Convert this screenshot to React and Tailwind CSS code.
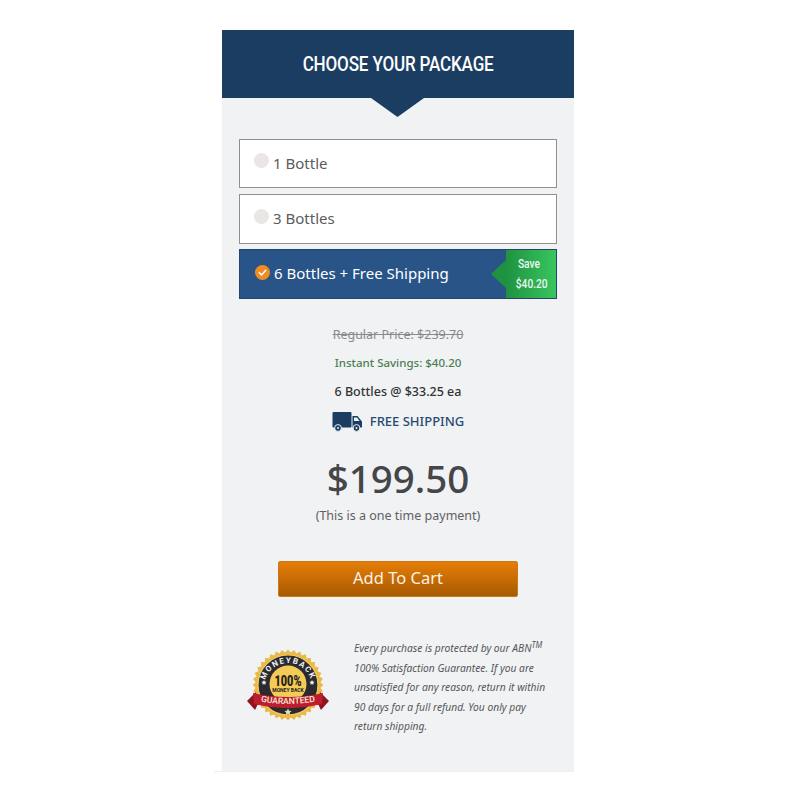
const SANS = "font-['Noto_Sans',sans-serif]";

function Radio({ checked }) {
  if (checked) {
    return (
      <svg viewBox="0 0 16 16" className="w-[15px] h-[15px] shrink-0 mt-[-4px]">
        <circle cx="8" cy="8" r="8" fill="#f08c26" />
        <path d="M4.6 8.3l2.3 2.3 4.4-4.8" fill="none" stroke="#fff" strokeWidth="1.7" strokeLinecap="round" strokeLinejoin="round" />
      </svg>
    );
  }
  return <span className="w-[15px] h-[15px] shrink-0 rounded-full bg-[#ebe6e6] mt-[-6px]" />;
}

function Option({ label, h }) {
  return (
    <div className={`flex items-center gap-[4px] pl-[14px] bg-white border border-[#8f8f8f] text-[#5c5c5c] text-[15px] ${h}`}>
      <Radio />
      <span className="-mt-[1px]">{label}</span>
    </div>
  );
}

function Truck() {
  return (
    <svg viewBox="0 0 31 20" className="w-[31px] h-[20px]">
      <rect x="0.5" y="0" width="19" height="15.5" rx="1" fill="#1b3d61" />
      <path d="M20.5 4h5l4.5 5.5v6h-9.5z" fill="#1b3d61" />
      <path d="M22 5.5h3l2.6 3.6H22z" fill="#f1f2f4" />
      <circle cx="6" cy="16" r="3.4" fill="#1b3d61" stroke="#f1f2f4" strokeWidth="1" />
      <circle cx="6" cy="16" r="1" fill="#f1f2f4" />
      <circle cx="24.5" cy="16" r="3.4" fill="#1b3d61" stroke="#f1f2f4" strokeWidth="1" />
      <circle cx="24.5" cy="16" r="1" fill="#f1f2f4" />
    </svg>
  );
}

function Seal() {
  const pts = [];
  const n = 36;
  for (let i = 0; i < n * 2; i++) {
    const r = i % 2 ? 32.5 : 35.5;
    const a = (i * Math.PI) / n;
    pts.push(`${(41 + r * Math.sin(a)).toFixed(1)},${(40 - r * Math.cos(a)).toFixed(1)}`);
  }
  return (
    <svg viewBox="0 0 82 82" className="w-[82px] h-[82px]">
      <polygon points={pts.join(' ')} fill="#e9b949" />
      <circle cx="41" cy="40" r="30" fill="#2a2a30" stroke="#f1c95c" strokeWidth="1.2" />
      <circle cx="41" cy="39" r="18.5" fill="#f4cb57" />
      <defs>
        <path id="sealArc" d="M17 42a24 24 0 0 1 48 0" />
      </defs>
      <text fontFamily="Roboto, sans-serif" fontWeight="700" fontSize="8" fill="#f2f2f2" letterSpacing="1.4">
        <textPath href="#sealArc" startOffset="50%" textAnchor="middle">MONEYBACK</textPath>
      </text>
      <text x="41" y="41" textAnchor="middle" fontFamily="Roboto, sans-serif" fontWeight="900" fontSize="15" fill="#26221c" textLength="27" lengthAdjust="spacingAndGlyphs">100%</text>
      <text x="41" y="47" textAnchor="middle" fontFamily="Roboto, sans-serif" fontWeight="700" fontSize="5" fill="#26221c">MONEY BACK</text>
      <path d="M0 56l9-9 2 12-3 6z" fill="#8f1420" />
      <path d="M82 56l-9-9-2 12 3 6z" fill="#8f1420" />
      <path d="M6 48q35 8 70 0l-1 11q-34 8-68 0z" fill="#bd1e2c" />
      <defs>
        <path id="sealBand" d="M9 55.5q32 7 64 0" />
      </defs>
      <text fontFamily="Roboto, sans-serif" fontWeight="500" fontSize="8.6" fill="#f6e9dc">
        <textPath href="#sealBand" startOffset="50%" textAnchor="middle">GUARANTEED</textPath>
      </text>
      <path d="M41 63.5l1.1 2.3 2.5.3-1.9 1.7.6 2.5-2.3-1.3-2.3 1.3.6-2.5-1.9-1.7 2.5-.3z" fill="#e8d9a8" />
      <path d="M17 35l.8 1.6 1.8.2-1.3 1.2.3 1.8-1.6-.9-1.6.9.3-1.8-1.3-1.2 1.8-.2z" fill="#f2f2f2" />
      <path d="M65 35l.8 1.6 1.8.2-1.3 1.2.3 1.8-1.6-.9-1.6.9.3-1.8-1.3-1.2 1.8-.2z" fill="#f2f2f2" />
    </svg>
  );
}

export default function App() {
  return (
    <div className={`w-[800px] h-[800px] bg-white pt-[30px] ${SANS}`}>
      <div className="ml-[222px] w-[352px] h-[741px] flex flex-col bg-[#f1f2f4]">
        {/* Header */}
        <div className="relative h-[68px] shrink-0 bg-[#1b3d61] flex items-center justify-center">
          <h2 className="font-['Roboto',sans-serif] font-medium text-[19.5px] text-white tracking-[-0.2px] scale-x-[0.875] whitespace-nowrap mt-[1px]">
            CHOOSE YOUR PACKAGE
          </h2>
          <svg viewBox="0 0 53 19" className="absolute left-[149px] top-[68px] w-[53px] h-[19px]">
            <path d="M0 0h53L26.5 19z" fill="#1b3d61" />
          </svg>
        </div>

        {/* Options */}
        <div className="mt-[41px] mx-[17px] flex flex-col gap-[6px]">
          <Option label="1 Bottle" h="h-[49px]" />
          <Option label="3 Bottles" h="h-[50px]" />
          <div className="relative h-[50px] -mt-px flex items-center gap-[4px] pl-[15px] bg-[#285487] border border-[#23456b] text-white text-[15px]">
            <Radio checked />
            <span className="-mt-[1px]">6 Bottles + Free Shipping</span>
            <div className="absolute right-0 top-0 bottom-0 w-[50px] bg-gradient-to-r from-[#1f9241] to-[#38c65f] flex flex-col items-center justify-center gap-[2px] font-['Roboto',sans-serif] font-medium text-[12px] leading-[18px] text-[#eaf7ee]">
              <span className="scale-x-[0.85] -ml-[4px]">Save</span>
              <span className="scale-x-[0.85] ml-[2px]">$40.20</span>
              <span className="absolute left-[-15px] top-[10px] w-0 h-0 border-y-[14px] border-y-transparent border-r-[15px] border-r-[#1f9241]" />
            </div>
          </div>
        </div>

        {/* Pricing */}
        <div className="mt-[26px] flex flex-col items-center">
          <p className="h-[20px] leading-[20px] text-[12.5px] text-[#8a8a8a] line-through">Regular Price: $239.70</p>
          <p className="mt-[8px] h-[20px] leading-[20px] text-[11.5px] font-medium text-[#4b7f52]">Instant Savings: $40.20</p>
          <p className="mt-[9px] h-[20px] leading-[20px] text-[12.5px] font-medium text-[#333333]">6 Bottles @ $33.25 ea</p>
          <div className="mt-[9px] h-[22px] flex items-center gap-[7px]">
            <Truck />
            <span className="text-[13px] font-medium text-[#274a70]">FREE SHIPPING</span>
          </div>
          <p className="mt-[20px] h-[50px] leading-[50px] text-[38.5px] font-medium text-[#444649]">$199.50</p>
          <p className="mt-[3px] h-[20px] leading-[20px] text-[12.5px] text-[#5f6062]">(This is a one time payment)</p>
          <button className="mt-[35px] w-[240px] h-[36px] rounded-[2px] border border-[#c97a1a] bg-gradient-to-b from-[#e57e07] to-[#a85a03] text-[#fbf3e6] text-[16.5px] leading-[30px] pb-[2px]">
            Add To Cart
          </button>
        </div>

        {/* Guarantee */}
        <div className="mt-[42px] flex pl-[25px]">
          <div className="w-[82px] shrink-0 mt-[6px]">
            <Seal />
          </div>
          <p className="ml-[25px] w-[196px] text-[10.25px] leading-[19.5px] italic text-[#55575a]">
            Every purchase is protected by our ABN<sup className="text-[8px] leading-none">TM</sup> 100% Satisfaction Guarantee. If you are unsatisfied for any reason, return it within 90 days for a full refund. You only pay return shipping.
          </p>
        </div>
      </div>
      <div className="ml-[214px] w-[360px] h-px bg-[#eceef0]" />
    </div>
  );
}
